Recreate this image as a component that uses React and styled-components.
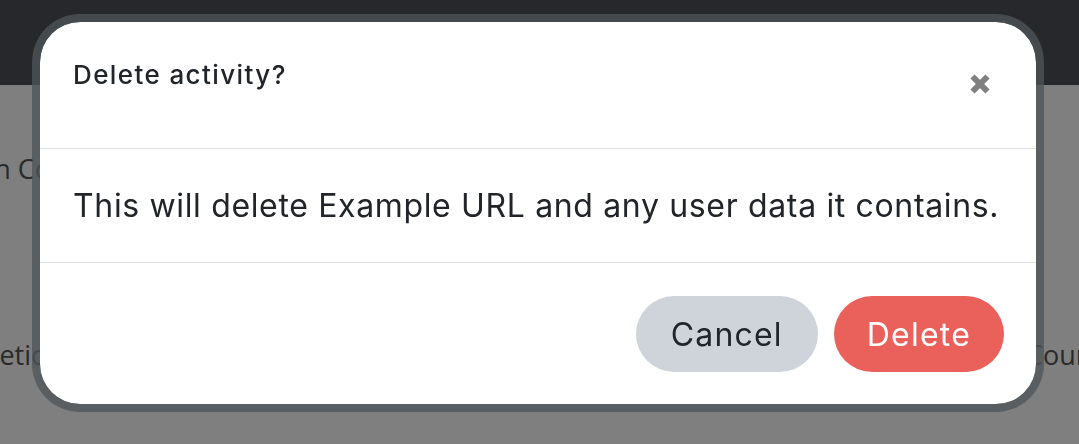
import React from "react";
import styled, { createGlobalStyle } from "styled-components";

const GlobalStyle = createGlobalStyle`
  html, body {
    margin: 0;
    padding: 0;
    height: 100%;
    overflow: hidden;
    background: #ffffff;
  }
  #root { height: 100%; }
  * { box-sizing: border-box; }
`;

const Page = styled.div`
  position: relative;
  height: 100%;
  overflow: hidden;
  font-family: "Open Sans", "Liberation Sans", sans-serif;
`;

const NavBar = styled.header`
  height: 85px;
  background: #4e5058;
`;

const Content = styled.main`
  display: flex;
  flex-direction: column;
  padding-top: 66px;
  gap: 150px;
  font-size: 27px;
  line-height: 36px;
  color: #555555;
`;

const TextRow = styled.div`
  display: grid;
  grid-template-columns: ${(p) => p.$left}px ${(p) => 1026 - p.$left}px max-content;
  white-space: nowrap;
`;

const LeftClip = styled.div`
  display: flex;
  justify-content: flex-end;
  white-space: nowrap;
`;

const RightText = styled.div`
  grid-column: 3;
  white-space: nowrap;
`;

const Backdrop = styled.div`
  position: fixed;
  inset: 0;
  background: rgba(0, 0, 0, 0.5);
  display: flex;
  align-items: flex-start;
  justify-content: flex-start;
  padding: 14px 0 0 32px;
`;

const Modal = styled.div`
  width: 1012px;
  background: #ffffff;
  background-clip: padding-box;
  border: 8px solid rgba(78, 84, 90, 0.77);
  border-radius: 48px;
  display: flex;
  flex-direction: column;
  font-family: Inter, "Noto Sans", sans-serif;
  color: #212529;
`;

const Header = styled.div`
  height: 127px;
  display: flex;
  align-items: flex-start;
  justify-content: space-between;
  padding: 34px 45px 0 33px;
  border-bottom: 1px solid #dee2e6;
`;

const Title = styled.h5`
  margin: 0;
  font-size: 26px;
  line-height: 37px;
  font-weight: 500;
  letter-spacing: 1.4px;
`;

const CloseButton = styled.button`
  margin-top: 17px;
  padding: 0;
  border: 0;
  background: transparent;
  width: 22px;
  height: 22px;
  display: flex;
  cursor: pointer;
`;

const Body = styled.div`
  padding: 32px 33px;
  font-size: 32px;
  line-height: 49px;
  letter-spacing: 0.65px;
  white-space: nowrap;
  border-bottom: 1px solid #dee2e6;
`;

const Footer = styled.div`
  display: flex;
  justify-content: flex-end;
  gap: 16px;
  padding: 33px 32px 32px;
`;

const Button = styled.button`
  height: 76px;
  padding: 0 ${(p) => (p.$variant === "danger" ? 33 : 35)}px;
  border: 0;
  border-radius: 38px;
  font-family: Inter, "Noto Sans", sans-serif;
  font-size: 32px;
  letter-spacing: 1.2px;
  background: ${(p) => (p.$variant === "danger" ? "#ea605a" : "#ced4da")};
  color: ${(p) => (p.$variant === "danger" ? "#ffffff" : "#212529")};
  cursor: pointer;
`;

const CloseIcon = () => (
  <svg width="22" height="22" viewBox="0 0 22 22" aria-hidden="true">
    <path
      d="M3.5 3.5 L18.5 18.5 M18.5 3.5 L3.5 18.5"
      stroke="#808080"
      strokeWidth="6"
      strokeLinecap="butt"
      fill="none"
    />
  </svg>
);

export default function App() {
  return (
    <>
      <GlobalStyle />
      <Page>
        <NavBar />
        <Content>
          <TextRow $left={51}>
            <LeftClip>Lesson Co</LeftClip>
          </TextRow>
          <TextRow $left={44}>
            <LeftClip>Arithmetic</LeftClip>
            <RightText>Course</RightText>
          </TextRow>
        </Content>
        <Backdrop>
          <Modal role="dialog" aria-modal="true">
            <Header>
              <Title>Delete activity?</Title>
              <CloseButton aria-label="Close">
                <CloseIcon />
              </CloseButton>
            </Header>
            <Body>This will delete Example URL and any user data it contains.</Body>
            <Footer>
              <Button>Cancel</Button>
              <Button $variant="danger">Delete</Button>
            </Footer>
          </Modal>
        </Backdrop>
      </Page>
    </>
  );
}
